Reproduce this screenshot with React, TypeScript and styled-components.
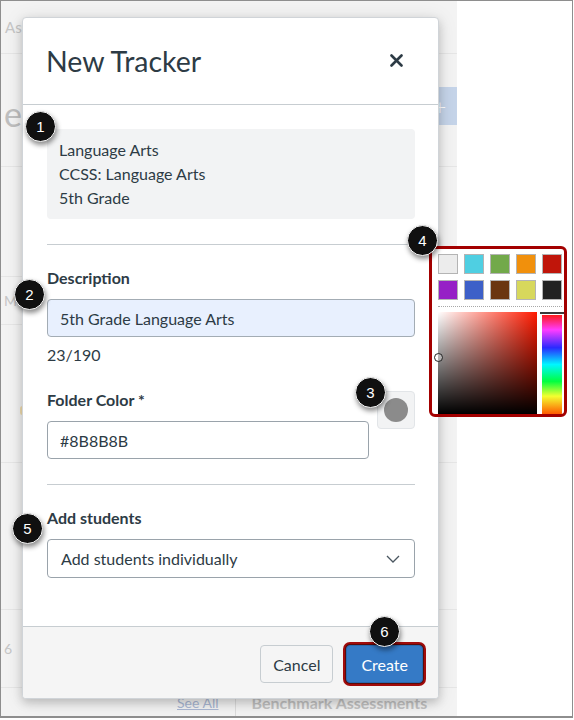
import React from 'react'
import styled, { createGlobalStyle } from 'styled-components'

const GlobalStyle = createGlobalStyle`
  html, body { margin: 0; padding: 0; background: #fff; }
  body { font-family: Lato, "Open Sans", Arial, sans-serif; color: #2d3b45; }
  * { box-sizing: border-box; }
`

const Frame = styled.div`
  position: relative;
  display: flex;
  width: 573px;
  height: 718px;
  border: 1px solid #8e8e8e;
  border-bottom-width: 2px;
  overflow: hidden;
  background: #fff;
`

/* page behind the modal */
const AppPage = styled.div`
  width: 456px;
  flex-shrink: 0;
  display: flex;
  flex-direction: column;
  background: #f3f3f3;
  color: #c6c6c6;
  overflow: hidden;
`

const BgTopBar = styled.div`
  height: 53px;
  display: flex;
  align-items: center;
  padding-left: 4px;
  font-size: 15px;
  border-bottom: 1px solid #e6e6e6;
  flex-shrink: 0;
`

const BgTitleRow = styled.div`
  height: 113px;
  display: flex;
  align-items: center;
  justify-content: space-between;
  border-bottom: 1px solid #e6e6e6;
  flex-shrink: 0;
`

const BgTitle = styled.h1`
  margin: 6px 0 0 3px;
  font-size: 34px;
  font-weight: 400;
  color: #bfbfbf;
`

const BgAddButton = styled.div`
  width: 34px;
  height: 38px;
  margin-top: -8px;
  display: flex;
  align-items: center;
  justify-content: center;
  background: #c5d4e9;
  color: #fff;
  font-size: 22px;
  font-weight: 300;
`

const BgRow = styled.div<{ $h: number }>`
  height: ${p => p.$h}px;
  flex-shrink: 0;
  display: flex;
  align-items: center;
  padding-left: 3px;
  font-size: 14px;
  border-bottom: 1px solid #e6e6e6;
`

const BgDot = styled.span`
  width: 5px;
  height: 9px;
  margin-left: 16px;
  margin-top: 34px;
  border-radius: 3px;
  background: #f0dcae;
`

const BgFooterRow = styled.div`
  flex: 1;
  display: flex;
  align-items: center;
  padding-left: 176px;
  padding-top: 1px;
`

const BgLink = styled.span`
  font-size: 14px;
  color: #aab8d4;
  text-decoration: underline;
  padding-right: 16px;
`

const BgSection = styled.span`
  border-left: 1px solid #dcdcdc;
  padding-left: 16px;
  font-size: 16px;
  font-weight: 700;
  color: #c2c2c2;
  line-height: 26px;
`

const BlankSide = styled.div`
  flex: 1;
  background: #fff;
`

/* modal */
const Modal = styled.div`
  position: absolute;
  left: 21px;
  top: 16px;
  width: 417px;
  height: 682px;
  display: flex;
  flex-direction: column;
  background: #fff;
  border: 1px solid #d0d4d8;
  border-radius: 4px;
  box-shadow: 0 4px 10px rgba(0, 0, 0, 0.18), 0 2px 20px rgba(0, 0, 0, 0.1);
  overflow: hidden;
`

const ModalHeader = styled.div`
  height: 87px;
  flex-shrink: 0;
  display: flex;
  align-items: center;
  justify-content: space-between;
  padding: 0 30px 0 24px;
  border-bottom: 1px solid #c7cdd1;
`

const Title = styled.h2`
  margin: 0 0 0 -1px;
  font-size: 28.5px;
  font-weight: 400;
  color: #2d3b45;
`

const CloseButton = styled.button`
  width: 24px;
  height: 24px;
  padding: 0;
  border: 0;
  background: none;
  display: flex;
  align-items: center;
  justify-content: center;
  margin-top: -2px;
`

const ModalBody = styled.div`
  flex: 1;
  display: flex;
  flex-direction: column;
  padding: 24px 23px 0 24px;
`

const InfoBox = styled.div`
  background: #f2f3f4;
  border-radius: 4px;
  padding: 9px 12px;
  font-size: 16px;
  line-height: 24px;
`

const Divider = styled.hr`
  margin: 25px 0 21px;
  border: 0;
  border-top: 1px solid #c7cdd1;
`

const Label = styled.div`
  font-size: 16px;
  font-weight: 700;
  line-height: 24px;
  margin-bottom: 9px;
`

const TextInput = styled.div<{ $autofill?: boolean }>`
  height: 38px;
  flex-shrink: 0;
  display: flex;
  align-items: center;
  padding: 0 12px;
  font-size: 16px;
  border: 1px solid ${p => (p.$autofill ? '#a3acb4' : '#9aa3ab')};
  border-radius: 4px;
  background: ${p => (p.$autofill ? '#e8f0fe' : '#fff')};
`

const Counter = styled.div`
  margin-top: 6px;
  font-size: 16px;
  line-height: 24px;
`

const ColorRow = styled.div`
  display: flex;
  align-items: flex-start;
  gap: 8px;
  margin-top: 21px;
`

const ColorField = styled.div`
  flex: 1;
`

const SwatchButton = styled.div`
  width: 38px;
  height: 38px;
  margin-top: 3px;
  display: flex;
  align-items: center;
  justify-content: center;
  background: #f2f3f4;
  border: 1px solid #e2e5e8;
  border-radius: 4px;
`

const SwatchDot = styled.span<{ $color: string }>`
  width: 24px;
  height: 24px;
  border-radius: 50%;
  background: ${p => p.$color};
`

const SelectBox = styled(TextInput)`
  height: 39px;
  justify-content: space-between;
  padding: 0 14px 0 13px;
`

const ModalFooter = styled.div`
  height: 72px;
  flex-shrink: 0;
  display: flex;
  align-items: center;
  justify-content: flex-end;
  gap: 13px;
  padding: 3px 15px 0;
  background: #f5f5f5;
  border-top: 1px solid #c7cdd1;
`

const Button = styled.button<{ $primary?: boolean }>`
  height: 38px;
  padding: 0 ${p => (p.$primary ? 14 : 12)}px;
  font-family: Lato, "Open Sans", Arial, sans-serif;
  font-size: 16px;
  border-radius: 4px;
  border: 1px solid ${p => (p.$primary ? '#2a6aae' : '#c7cdd1')};
  background: ${p => (p.$primary ? '#357ac6' : '#f5f5f5')};
  color: ${p => (p.$primary ? '#fff' : '#2d3b45')};
  box-shadow: ${p => (p.$primary ? '0 0 0 1px #5b0a0a, 0 0 0 3px #a10b0b' : 'none')};
`

/* colour picker popover */
const Popover = styled.div`
  position: absolute;
  left: 428px;
  top: 245px;
  width: 138px;
  height: 171px;
  display: flex;
  flex-direction: column;
  padding: 5px 0 0 6px;
  background: #fff;
  border: 3px solid #a30000;
  border-radius: 6px;
  overflow: hidden;
`

const SwatchGrid = styled.div`
  display: grid;
  grid-template-columns: repeat(5, 20px);
  gap: 6px;
`

const Swatch = styled.span<{ $color: string }>`
  width: 20px;
  height: 20px;
  background: ${p => p.$color};
  border: 1px solid #b4b4b4;
`

const Dotted = styled.div`
  margin: 6px 2px 0 0;
  border-top: 1px dotted #a8a8a8;
`

const PickerArea = styled.div`
  flex: 1;
  display: flex;
  gap: 5px;
  margin-top: 5px;
`

const SatValue = styled.div`
  position: relative;
  width: 100px;
  background: linear-gradient(to top, #000, rgba(0, 0, 0, 0)),
    linear-gradient(to right, #fff, #ff1a00);
`

const SatMarker = styled.span`
  position: absolute;
  left: -4px;
  top: 41px;
  width: 9px;
  height: 9px;
  border-radius: 50%;
  border: 1px solid #222;
  background: rgba(255, 255, 255, 0.35);
`

const HueColumn = styled.div`
  width: 24px;
  display: flex;
  flex-direction: column;
  align-items: center;
  margin-left: -2px;
`

const HueMarker = styled.span`
  width: 24px;
  height: 2px;
  background: #3a3a3a;
`

const HueBar = styled.div`
  flex: 1;
  width: 20px;
  margin-top: 1px;
  background: linear-gradient(
    to bottom,
    #ff1a1a 0%,
    #ff3cff 15%,
    #2a2aff 33%,
    #00f6ff 50%,
    #00ff40 67%,
    #f4ff30 82%,
    #ff5a00 100%
  );
`

/* numbered callouts */
const Badge = styled.span<{ $x: number; $y: number }>`
  position: absolute;
  left: ${p => p.$x - 16}px;
  top: ${p => p.$y - 16}px;
  width: 31px;
  height: 31px;
  border-radius: 50%;
  display: flex;
  align-items: center;
  justify-content: center;
  background: #101010;
  border: 1.5px solid #f4f4f4;
  color: #fff;
  font-family: Arial, "Liberation Sans", sans-serif;
  font-size: 15px;
  box-shadow: 1px 3px 5px rgba(0, 0, 0, 0.45);
`

const swatches = [
  '#ececec', '#4fcfe2', '#72a94a', '#f1900c', '#c0150a',
  '#9620c6', '#3d60c8', '#6a3610', '#d7d85c', '#222222',
]

const callouts = [
  { n: 1, x: 41, y: 127 },
  { n: 2, x: 30, y: 295 },
  { n: 3, x: 371, y: 393 },
  { n: 4, x: 423, y: 241 },
  { n: 5, x: 28, y: 529 },
  { n: 6, x: 385, y: 632 },
]

const App = () => (
  <>
    <GlobalStyle />
    <Frame>
      <AppPage>
        <BgTopBar>Assessments</BgTopBar>
        <BgTitleRow>
          <BgTitle>e</BgTitle>
          <BgAddButton>+</BgAddButton>
        </BgTitleRow>
        <BgRow $h={110} />
        <BgRow $h={48}>M</BgRow>
        <BgRow $h={138}>
          <BgDot />
        </BgRow>
        <BgRow $h={147} />
        <BgRow $h={78}>6</BgRow>
        <BgFooterRow>
          <BgLink>See All</BgLink>
          <BgSection>Benchmark Assessments</BgSection>
        </BgFooterRow>
      </AppPage>
      <BlankSide />

      <Modal>
        <ModalHeader>
          <Title>New Tracker</Title>
          <CloseButton aria-label="Close">
            <svg width="13" height="13" viewBox="0 0 13 13">
              <path d="M1.5 1.5 L11.5 11.5 M11.5 1.5 L1.5 11.5" stroke="#2d3b45" strokeWidth="2.6" strokeLinecap="round" />
            </svg>
          </CloseButton>
        </ModalHeader>
        <ModalBody>
          <InfoBox>
            Language Arts
            <br />
            CCSS: Language Arts
            <br />
            5th Grade
          </InfoBox>
          <Divider />
          <Label>Description</Label>
          <TextInput $autofill>5th Grade Language Arts</TextInput>
          <Counter>23/190</Counter>
          <ColorRow>
            <ColorField>
              <Label>Folder Color *</Label>
              <TextInput>#8B8B8B</TextInput>
            </ColorField>
            <SwatchButton>
              <SwatchDot $color="#8b8b8b" />
            </SwatchButton>
          </ColorRow>
          <Divider />
          <Label>Add students</Label>
          <SelectBox>
            Add students individually
            <svg width="14" height="8" viewBox="0 0 14 8">
              <polyline points="1,1 7,7 13,1" fill="none" stroke="#4a5660" strokeWidth="1.3" />
            </svg>
          </SelectBox>
        </ModalBody>
        <ModalFooter>
          <Button>Cancel</Button>
          <Button $primary>Create</Button>
        </ModalFooter>
      </Modal>

      <Popover>
        <SwatchGrid>
          {swatches.map(c => (
            <Swatch key={c} $color={c} />
          ))}
        </SwatchGrid>
        <Dotted />
        <PickerArea>
          <SatValue>
            <SatMarker />
          </SatValue>
          <HueColumn>
            <HueMarker />
            <HueBar />
          </HueColumn>
        </PickerArea>
      </Popover>

      {callouts.map(c => (
        <Badge key={c.n} $x={c.x - 1} $y={c.y - 1}>
          {c.n}
        </Badge>
      ))}
    </Frame>
  </>
)

export default App
